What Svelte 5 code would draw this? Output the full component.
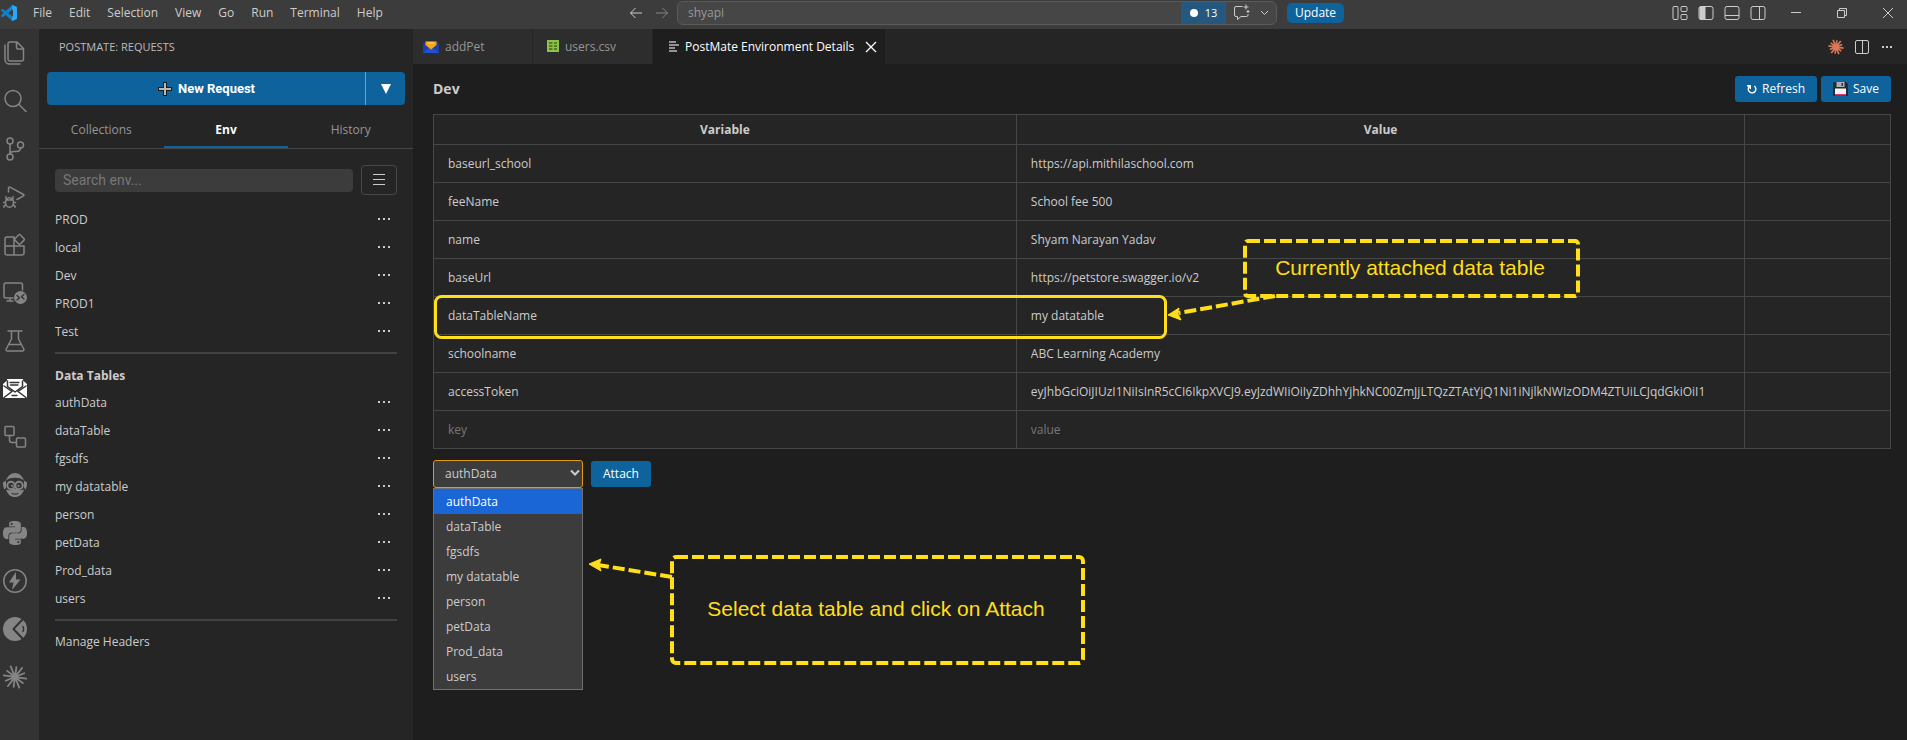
<script>
  const menus = ['File', 'Edit', 'Selection', 'View', 'Go', 'Run', 'Terminal', 'Help'];
  const activities = ['Explorer', 'Search', 'Source Control', 'Run and Debug', 'Extensions', 'Remote Explorer', 'Testing', 'PostMate', 'Diagrams', 'Assistant', 'Python', 'Thunder', 'Viewer', 'Claude'];
  const environments = ['PROD', 'local', 'Dev', 'PROD1', 'Test'];
  const tables = ['authData', 'dataTable', 'fgsdfs', 'my datatable', 'person', 'petData', 'Prod_data', 'users'];
  const variables = [
    { key: 'baseurl_school', value: 'https://api.mithilaschool.com' },
    { key: 'feeName', value: 'School fee 500' },
    { key: 'name', value: 'Shyam Narayan Yadav' },
    { key: 'baseUrl', value: 'https://petstore.swagger.io/v2' },
    { key: 'dataTableName', value: 'my datatable' },
    { key: 'schoolname', value: 'ABC Learning Academy' },
    { key: 'accessToken', value: 'eyJhbGciOiJIUzI1NiIsInR5cCI6IkpXVCJ9.eyJzdWIiOiIyZDhhYjhkNC00ZmJjLTQzZTAtYjQ1Ni1iNjlkNWIzODM4ZTUiLCJqdGkiOiI1' },
    { key: '', value: '' }
  ];
  let selected = $state('authData');

  const rays = Array.from({ length: 12 }, (_, i) => {
    const a = (i * 30 + 8) * Math.PI / 180;
    const r = i % 2 ? 10 : 11.5;
    return `M${12 + 2 * Math.cos(a)} ${12 + 2 * Math.sin(a)}L${12 + r * Math.cos(a)} ${12 + r * Math.sin(a)}`;
  }).join('');
</script>

{#snippet activityIcon(name)}
  <svg viewBox="0 0 24 24" width="24" height="24" fill="none" stroke="currentColor" stroke-width="1.5" stroke-linejoin="round" stroke-linecap="round" aria-hidden="true">
    {#if name === 'Explorer'}
      <path d="M7 1h7l6.500 6.500v10.500a2 2 0 0 1-2 2H7a2 2 0 0 1-2-2V3a2 2 0 0 1 2-2zM13.500 1v5.500a1.500 1.500 0 0 0 1.500 1.500h5.500M2 4v14.500a4.500 4.500 0 0 0 4.500 4.500H17" />
    {:else if name === 'Search'}
      <circle cx="10" cy="9.500" r="8" /><path d="M16 15.500l7 7" />
    {:else if name === 'Source Control'}
      <circle cx="7" cy="4" r="3" /><circle cx="7" cy="20" r="3" /><circle cx="17.500" cy="8" r="3" /><path d="M7 7v10M17.500 11c0 3-2 3.500-4.500 3.500h-2c-2.500 0-4 .5-4 2.500" />
    {:else if name === 'Run and Debug'}
      <path d="M5.500 7V3a1 1 0 0 1 1.500-.9l13.500 7.400a.8.800 0 0 1 0 1.400L14 14.500" />
      <ellipse cx="6.500" cy="17.500" rx="4" ry="4.800" /><path d="M3 15h7M3 11.500v2l1.500 1M10 11.500v2l-1.500 1M.5 17.500h2M10.500 17.500h2M1 22.500v-1.500l2-1M12 22.500v-1.500l-2-1" stroke-width="1.400" />
    {:else if name === 'Extensions'}
      <path d="M11 4H4a2 2 0 0 0-2 2v14a2 2 0 0 0 2 2h15a2 2 0 0 0 2-2v-7H2M11 4v18M21 13" /><rect x="12.700" y="2.700" width="7.500" height="7.500" rx="1" transform="rotate(45 16.500 6.500)" />
    {:else if name === 'Remote Explorer'}
      <path d="M10 17H3a2 2 0 0 1-2-2V4a2 2 0 0 1 2-2h14.500a2 2 0 0 1 2 2v5M4 20h6M7 17v3" />
      <circle cx="17.500" cy="16.500" r="6.500" fill="currentColor" stroke="none" /><path d="M14 14.500l2.500 2.200L14 19M21 13.500l-2.500 2.200 2.500 2.300" stroke="#333" stroke-width="1.300" />
    {:else if name === 'Testing'}
      <path d="M5 2h14M8.500 2v8L3.200 20a1.400 1.400 0 0 0 1.300 2h15a1.400 1.400 0 0 0 1.300-2L15.500 10V2M6.300 15.500h11.400" />
    {:else if name === 'PostMate'}
      <path d="M0 7l4-3.500V2h16v1.500L24 7v14H0z" fill="currentColor" stroke="none" />
      <path d="M4.500 4v5.500L12 15l7.500-5.500V4M1 9l8 5.500L1 20.500M23 9l-8 5.500 8 6" stroke="#333" stroke-width="1.500" />
      <path d="M7 5.500h9M7.500 8h7.500M9 18.500h5" stroke="#333" stroke-width="1.300" />
    {:else if name === 'Diagrams'}
      <rect x="2" y="1.500" width="9" height="9" rx="1" /><rect x="13.500" y="13" width="9" height="9" rx="1" /><path d="M6.500 10.500V15a2.500 2.500 0 0 0 2.500 2.500h4.500" />
    {:else if name === 'Assistant'}
      <path d="M3 7.500C4.500 3 8 0 12 0s7.500 3 9 7.500C18.500 5.500 15.500 4.800 12 4.800S5.500 5.500 3 7.500z" fill="currentColor" stroke="none" />
      <path d="M0 9.500l3-2v7l-1.500 2C.5 15 0 12 0 9.500zM24 9.500l-3-2v7l1.500 2c1-1.500 1.500-4.500 1.500-7z" fill="currentColor" stroke="none" />
      <path d="M3 16.500c2 1.200 5.500 1 7.500-.8h3c2 1.800 5.500 2 7.500.8C19.500 21.500 16 24 12 24s-7.500-2.500-9-7.500z" fill="currentColor" stroke="none" />
      <circle cx="8" cy="12.500" r="3.700" stroke-width="2" /><circle cx="16" cy="12.500" r="3.700" stroke-width="2" />
      <circle cx="9" cy="12.800" r="1.100" fill="currentColor" stroke="none" /><circle cx="15.500" cy="12.800" r="1.100" fill="currentColor" stroke="none" />
      <path d="M9 20.500c2 .8 4 .8 6 0" stroke="#333" stroke-width="1.200" />
    {:else if name === 'Python'}
      <path fill="currentColor" stroke="none" d="M14.25.18l.9.2.73.26.59.3.45.32.34.34.25.34.16.33.1.3.04.26.02.2-.01.13V8.500l-.05.63-.13.55-.21.46-.26.38-.3.31-.33.25-.35.19-.35.14-.33.1-.3.07-.26.04-.21.02H8.770l-.69.05-.59.14-.5.22-.41.27-.33.32-.27.35-.2.36-.15.37-.1.35-.07.32-.04.27-.02.21v3.060H3.170l-.21-.03-.28-.07-.32-.12-.35-.18-.36-.26-.36-.36-.35-.46-.32-.59-.28-.73-.21-.88-.14-1.050-.05-1.230.06-1.220.16-1.040.24-.87.32-.71.36-.57.4-.44.42-.33.42-.24.4-.16.36-.1.32-.05.24-.01h.16l.06.01h8.160v-.83H6.180l-.01-2.750-.02-.37.05-.34.11-.31.17-.28.25-.26.31-.23.38-.2.44-.18.51-.15.58-.12.64-.1.71-.06.77-.04.84-.02 1.270.05zm-6.300 1.980l-.23.33-.08.41.08.41.23.34.33.22.41.09.41-.09.33-.22.23-.34.08-.41-.08-.41-.23-.33-.33-.22-.41-.09-.41.09zm13.090 3.950l.28.06.32.12.35.18.36.27.36.35.35.47.32.59.28.73.21.88.14 1.040.05 1.230-.06 1.230-.16 1.040-.24.86-.32.71-.36.57-.4.45-.42.33-.42.24-.4.16-.36.09-.32.05-.24.02-.16-.01h-8.220v.82h5.840l.01 2.760.02.36-.05.34-.11.31-.17.29-.25.25-.31.24-.38.2-.44.17-.51.15-.58.13-.64.09-.71.07-.77.04-.84.01-1.270-.04-1.070-.14-.9-.2-.73-.25-.59-.3-.45-.33-.34-.34-.25-.34-.16-.33-.1-.3-.04-.25-.02-.2.01-.13v-5.340l.05-.64.13-.54.21-.46.26-.38.3-.32.33-.24.35-.2.35-.14.33-.1.3-.06.26-.04.21-.02.13-.01h5.840l.69-.05.59-.14.5-.21.41-.28.33-.32.27-.35.2-.36.15-.36.1-.35.07-.32.04-.28.02-.21V6.070h2.090l.14.01zm-6.470 14.250l-.23.33-.08.41.08.41.23.33.33.23.41.08.41-.08.33-.23.23-.33.08-.41-.08-.41-.23-.33-.33-.23-.41-.08-.41.08z" />
    {:else if name === 'Thunder'}
      <circle cx="12" cy="12" r="11.200" /><path d="M13 3L6 13.500h4.500L9 21l8.500-10.500H13z" fill="currentColor" stroke="none" />
    {:else if name === 'Viewer'}
      <circle cx="12" cy="12" r="12" fill="currentColor" stroke="none" /><path d="M19.500 2.500L10.500 12l9 9.500" stroke="#333" stroke-width="2" /><path d="M20 9.500c.8 1.600.8 3.400 0 5" stroke="#333" stroke-width="1.500" />
    {:else}
      <path d={rays} stroke-width="1.800" /><circle cx="12" cy="12" r="3" fill="currentColor" stroke="none" />
    {/if}
  </svg>
{/snippet}

<div class="window">
  <header class="titlebar">
    <nav class="menus" aria-label="Application menu">
      <svg class="brand" viewBox="0 0 24 24" width="16" height="16" aria-hidden="true">
        <defs><linearGradient id="brand"><stop offset=".68" stop-color="#0f80cc" /><stop offset=".72" stop-color="#29a8f5" /></linearGradient></defs>
        <path fill="url(#brand)" d="M23.150 2.587L18.210.21a1.494 1.494 0 0 0-1.705.29l-9.460 8.630-4.120-3.128a.999.999 0 0 0-1.276.057L.327 7.261A1 1 0 0 0 .326 8.740L3.899 12 .326 15.260a1 1 0 0 0 .001 1.479L1.650 17.940a.999.999 0 0 0 1.276.057l4.120-3.128 9.460 8.630a1.492 1.492 0 0 0 1.704.29l4.942-2.377A1.500 1.500 0 0 0 24 20.060V3.939a1.500 1.500 0 0 0-.85-1.352zm-5.146 14.861L10.826 12l7.178-5.448v10.896z" />
      </svg>
      {#each menus as menu}<button>{menu}</button>{/each}
    </nav>
    <div class="center">
      <button class="nav" aria-label="Back"><svg width="14" height="14" viewBox="0 0 14 14"><path d="M13 7H1.500M6.500 2l-5 5 5 5" /></svg></button>
      <button class="nav dim" aria-label="Forward"><svg width="14" height="14" viewBox="0 0 14 14"><path d="M1 7h11.500M7.500 2l5 5-5 5" /></svg></button>
      <div class="command">
        <button class="query">shyapi</button>
        <button class="count"><span class="dot"></span>13</button>
        <button class="chat" aria-label="Chat">
          <svg width="17" height="17" viewBox="0 0 17 17"><path d="M9.500 2.500H3A1.500 1.500 0 0 0 1.500 4v7A1.500 1.500 0 0 0 3 12.500h1.500v3l3.500-3h5.500A1.500 1.500 0 0 0 15 11v-1M13 .5v5M10.500 3h5M15 6v3M13.500 7.500h3" /></svg>
        </button>
        <button class="chat" aria-label="Chat options"><svg width="9" height="9" viewBox="0 0 9 9"><path d="M1 3l3.500 3.500L8 3" /></svg></button>
      </div>
      <button class="update">Update</button>
    </div>
    <div class="window-tools">
      <button aria-label="Customize layout"><svg width="16" height="16" viewBox="0 0 16 16"><rect x="1" y="1.500" width="5" height="13" rx="1" /><rect x="9" y="1.500" width="6" height="5" rx="1" /><rect x="9" y="9.500" width="6" height="5" rx="1" /></svg></button>
      <button aria-label="Toggle side bar"><svg width="16" height="16" viewBox="0 0 16 16"><rect x="1" y="1.500" width="14" height="13" rx="2" /><path d="M2 2h5v12H2z" fill="#ccc" /></svg></button>
      <button aria-label="Toggle panel"><svg width="16" height="16" viewBox="0 0 16 16"><rect x="1" y="1.500" width="14" height="13" rx="2" /><path d="M1 10.500h14" /></svg></button>
      <button aria-label="Toggle secondary side bar"><svg width="16" height="16" viewBox="0 0 16 16"><rect x="1" y="1.500" width="14" height="13" rx="2" /><path d="M9.500 1.500v13" /></svg></button>
    </div>
    <div class="window-controls">
      <button aria-label="Minimize"><svg width="12" height="12" viewBox="0 0 12 12"><path d="M1 5.500h10" /></svg></button>
      <button aria-label="Restore"><svg width="12" height="12" viewBox="0 0 12 12"><path d="M1.500 3.500h7v7h-7zM3.500 3V1.500h7v7H9" /></svg></button>
      <button aria-label="Close"><svg width="12" height="12" viewBox="0 0 12 12"><path d="M1 1l10 10M11 1L1 11" /></svg></button>
    </div>
  </header>

  <div class="workbench">
    <nav class="activity" aria-label="Activity bar">
      {#each activities as name}
        <button class:current={name === 'PostMate'} aria-label={name}>{@render activityIcon(name)}</button>
      {/each}
    </nav>

    <aside class="sidebar">
      <h2>POSTMATE: REQUESTS</h2>
      <div class="split">
        <button class="new">
          <svg width="16" height="16" viewBox="0 0 16 16" aria-hidden="true"><path d="M8 1v14M1 8h14" stroke="#1b1b1b" stroke-width="4" /><path d="M8 2v12M2 8h12" stroke="#b9b9b9" stroke-width="2" /></svg>
          New Request
        </button>
        <button class="more" aria-label="More request types"><svg width="10" height="10" viewBox="0 0 10 10"><path d="M0 0h10L5 10z" fill="#fff" /></svg></button>
      </div>
      <div class="tabs" role="tablist">
        <button role="tab" aria-selected="false">Collections</button>
        <button role="tab" aria-selected="true">Env</button>
        <button role="tab" aria-selected="false">History</button>
      </div>
      <div class="panel">
        <div class="search">
          <input type="text" placeholder="Search env..." aria-label="Search env" />
          <button aria-label="Menu"><svg width="12" height="12" viewBox="0 0 12 12"><path d="M0 .5h12M0 5.500h12M0 10.500h12" stroke="#ccc" stroke-width="1" /></svg></button>
        </div>
        <ul>
          {#each environments as name}
            <li><a href="#env">{name}</a><button aria-label={`Actions for ${name}`}><i></i><i></i><i></i></button></li>
          {/each}
        </ul>
        <hr />
        <h3>Data Tables</h3>
        <ul>
          {#each tables as name}
            <li><a href="#table">{name}</a><button aria-label={`Actions for ${name}`}><i></i><i></i><i></i></button></li>
          {/each}
        </ul>
        <hr />
        <a class="manage" href="#headers">Manage Headers</a>
      </div>
    </aside>

    <main class="editor">
      <div class="editor-tabs">
        <button class="file">
          <svg width="16" height="16" viewBox="0 0 16 16" aria-hidden="true"><path d="M0 5l3-3h10l3 3v9H0z" fill="#1d3fae" /><path d="M0 14l6-5 2 1 2-1 6 5z" fill="#2451d3" /><path d="M2.500 2.500h11V6L8 10.500 2.500 6z" fill="#f9a815" /><path d="M5 4h6" stroke="#ffe08a" /></svg>
          addPet
        </button>
        <button class="file">
          <svg width="16" height="16" viewBox="0 0 16 16" aria-hidden="true"><path d="M4 1h12v12H4z" fill="#8dc149" /><path d="M6 4h3.500M11 4h3M6 7h3.500M11 7h3M6 10h3.500M11 10h3" stroke="#3f6a1b" stroke-width="1.500" /></svg>
          users.csv
        </button>
        <button class="file active">
          <svg width="10" height="12" viewBox="0 0 10 12" aria-hidden="true"><path d="M0 1h7M0 4h10M0 7h6M0 10h8" stroke="#bbb" stroke-width="1.500" /></svg>
          PostMate Environment Details
          <svg class="close" width="12" height="12" viewBox="0 0 12 12" aria-hidden="true"><path d="M1 1l10 10M11 1L1 11" stroke="#fff" stroke-width="1.300" /></svg>
        </button>
        <div class="editor-actions">
          <button aria-label="Claude"><svg width="16" height="16" viewBox="0 0 24 24"><path d={rays} stroke="#d97757" stroke-width="2.500" /><circle cx="12" cy="12" r="4" fill="#d97757" /></svg></button>
          <button aria-label="Split editor"><svg width="16" height="16" viewBox="0 0 16 16" fill="none" stroke="#ccc"><rect x="1.500" y="1.500" width="13" height="13" rx="1.500" /><path d="M8.500 1.500v13" /></svg></button>
          <button class="dots" aria-label="More actions"><i></i><i></i><i></i></button>
        </div>
      </div>

      <section class="content">
        <div class="heading">
          <h1>Dev</h1>
          <button class="primary"><svg width="10" height="10" viewBox="0 0 10 10" fill="none" stroke="#fff" stroke-width="1.400" aria-hidden="true"><path d="M7.300 2A3.800 3.800 0 1 1 2.500 2.300M0 1.800h3.300v3.200" /></svg>Refresh</button>
          <button class="primary"><svg width="15" height="14" viewBox="0 0 15 14" aria-hidden="true"><path d="M1 0h12l2 2v12H0V1z" fill="#222b33" /><path d="M3.500 0h8v5h-8z" fill="#a9b0b5" /><path d="M8.500 1H10v3H8.500z" fill="#333" /><path d="M2 6.500h11V12H2z" fill="#f4f4f4" /><path d="M2 12h11v1.500H2z" fill="#e0356b" /></svg>Save</button>
        </div>

        <table>
          <colgroup><col class="key" /><col class="val" /><col /></colgroup>
          <thead><tr><th>Variable</th><th>Value</th><th></th></tr></thead>
          <tbody>
            {#each variables as row}
              <tr>
                <td><input type="text" value={row.key} placeholder="key" aria-label="Variable name" /></td>
                <td><input type="text" value={row.value} placeholder="value" aria-label="Variable value" /></td>
                <td></td>
              </tr>
            {/each}
          </tbody>
        </table>

        <div class="attach">
          <div class="picker">
            <select bind:value={selected} aria-label="Data table">
              {#each tables as name}<option>{name}</option>{/each}
            </select>
            <svg class="caret" width="10" height="8" viewBox="0 0 10 8" aria-hidden="true"><path d="M1 1.500l4 4 4-4" fill="none" stroke="#ccc" stroke-width="2" /></svg>
            <ul class="options" role="listbox" aria-label="Data tables">
              {#each tables as name}
                <li role="option" aria-selected={name === selected}>{name}</li>
              {/each}
            </ul>
          </div>
          <button class="primary">Attach</button>
        </div>

        <svg class="notes" width="1200" height="640" viewBox="0 0 1200 640" fill="none" stroke="#ffde1a">
          <rect x="22.500" y="232.500" width="730" height="41" rx="6" stroke-width="3" />
          <rect x="832" y="177" width="333" height="55" rx="3" stroke-width="4" stroke-dasharray="12 4" />
          <path d="M862 232L766 249" stroke-width="4" stroke-dasharray="12 4" />
          <path d="M755 251l11-7-1 6 3 6z" fill="#ffde1a" stroke-width="1" />
          <text x="997" y="211" text-anchor="middle">Currently attached data table</text>
          <rect x="259" y="493" width="411" height="106" rx="4" stroke-width="4" stroke-dasharray="12 4" />
          <path d="M259 513L185 501" stroke-width="4" stroke-dasharray="12 4" />
          <path d="M176 500l12-5-2 6 2 6z" fill="#ffde1a" stroke-width="1" />
          <text x="463" y="552" text-anchor="middle">Select data table and click on Attach</text>
        </svg>
      </section>
    </main>
  </div>
</div>

<style>
  :global(body) { margin: 0; background: #1e1e1e; }
  * { box-sizing: border-box; }
  button, input, select { font: inherit; color: inherit; }
  button { display: flex; align-items: center; justify-content: center; border: 0; padding: 0; background: none; cursor: pointer; white-space: nowrap; }
  a { color: inherit; text-decoration: none; }
  ul { list-style: none; margin: 0; padding: 0; }
  svg { flex: none; }
  i { display: block; width: 2px; height: 2px; background: #ccc; }

  .window { min-height: 100vh; display: flex; flex-direction: column; color: #ccc; font: 12px/16px "Open Sans", "Noto Sans", sans-serif; }

  .titlebar { display: grid; grid-template-columns: 61fr auto 42fr auto; height: 29px; padding-bottom: 4px; background: #3c3c3c; }
  .menus { display: flex; align-items: center; gap: 1px; padding-left: 1px; }
  .brand { margin-right: 7px; }
  .menus button { padding: 0 8px; }
  .center { display: flex; align-items: center; }
  .center svg, .window-tools svg, .window-controls svg { fill: none; stroke: #ccc; }
  .nav { width: 26px; }
  .dim { opacity: .5; }
  .command { display: flex; align-items: stretch; width: 600px; height: 24px; margin: 0 10px 0 2px; border: 1px solid #5a5a5a; border-radius: 6px; background: #464646; overflow: hidden; }
  .query { flex: 1; justify-content: flex-start; padding-left: 10px; color: #999; }
  .count { width: 45px; gap: 7px; background: #24587f; color: #fff; font-size: 11px; }
  .dot { width: 8px; height: 8px; border-radius: 50%; background: #fff; }
  .chat { padding: 0 7px; }
  .chat + .chat { padding: 0 7px 0 3px; }
  .update { height: 20px; padding: 0 8px; border-radius: 5px; background: #0e639c; color: #fff; }
  .window-tools { display: flex; justify-content: flex-end; gap: 10px; padding-right: 7px; }
  .window-controls { display: flex; margin-right: -4px; }
  .window-controls button { width: 46px; }

  .workbench { flex: 1; display: flex; }
  .activity { width: 39px; background: #333; color: #858585; }
  .activity button { width: 30px; height: 48px; }
  .activity .current { color: #fff; }

  .sidebar { width: 374px; background: #252526; }
  .sidebar h2 { margin: 0; padding: 10px 20px 0; height: 43px; font-size: 11px; font-weight: 400; color: #bbb; }
  .split { display: flex; height: 33px; margin: 0 8px; border-radius: 4px; background: #0e639c; color: #fff; overflow: hidden; }
  .new { flex: 1; gap: 5px; font-family: Roboto, sans-serif; font-size: 13px; font-weight: 700; }
  .more { width: 40px; border-left: 1px solid #6ea1c4; }
  .tabs { display: flex; height: 44px; border-bottom: 1px solid #474747; }
  .tabs button { flex: 1; padding-top: 8px; border-bottom: 2px solid transparent; color: #969696; }
  .tabs button[aria-selected="true"] { border-color: #0e639c; color: #fff; font-weight: 700; }
  .panel { padding: 16px; }
  .search { display: flex; align-items: center; gap: 8px; margin-bottom: 11px; }
  .search input { flex: 1; min-width: 0; height: 23px; padding: 0 8px; border: 0; border-radius: 4px; background: #3c3c3c; font-family: Roboto, sans-serif; font-size: 14px; }
  .search input::placeholder { color: #777; }
  .search button { width: 36px; height: 30px; border: 1px solid #474747; border-radius: 4px; }
  li { display: flex; align-items: center; }
  .panel li { justify-content: space-between; height: 28px; }
  .panel li button { gap: 3px; width: 26px; height: 24px; padding-bottom: 2px; }
  hr { height: 2px; margin: 6px 0 13px; border: 0; background: #424242; }
  h3 { margin: 0 0 4px; font-size: 12px; line-height: 18px; }
  .manage { display: block; }

  .editor { flex: 1; min-width: 0; }
  .editor-tabs { display: flex; height: 35px; background: #252526; }
  .file { width: 120px; justify-content: flex-start; gap: 6px; padding: 1px 0 0 10px; border-right: 1px solid #252526; background: #2d2d2d; color: #969696; }
  .file.active { width: auto; padding: 1px 8px 0 16px; background: #1e1e1e; color: #fff; }
  .close { margin-left: 5px; }
  .editor-actions { display: flex; gap: 10px; margin-left: auto; padding-right: 15px; }
  .dots { gap: 2px; padding-left: 2px; }

  .content { position: relative; padding: 12px 16px 0 20px; }
  .heading { display: flex; align-items: center; gap: 4px; height: 26px; margin-bottom: 12px; }
  h1 { flex: 1; margin: 0; font-size: 14px; line-height: 20px; }
  .primary { height: 26px; gap: 5px; padding: 0 12px; border-radius: 3px; background: #0e639c; color: #fff; }
  table { width: 100%; table-layout: fixed; border-collapse: collapse; background: #252526; }
  .key { width: 40%; }
  .val { width: 50%; }
  th, td { border: 1px solid #474747; }
  th { height: 30px; padding: 0; }
  td { height: 38px; padding: 0 4px 0 14px; }
  td input { display: block; width: 100%; padding: 0; border: 0; background: none; }
  td input::placeholder { color: #777; }
  .attach { display: flex; align-items: center; gap: 8px; margin-top: 11px; }
  .picker { position: relative; width: 150px; }
  select { display: block; width: 100%; height: 28px; padding: 0 11px; border: 1px solid #e39a0c; border-radius: 3px; background: #3c3c3c; appearance: none; }
  .caret { position: absolute; right: 3px; top: 9px; }
  .options { position: absolute; z-index: 1; top: 100%; left: 0; right: 0; border: 1px solid #707070; background: #3c3c3c; }
  .options li { height: 25px; padding: 0 12px; }
  .options li[aria-selected="true"] { background: #1a66d6; color: #fff; }
  .notes { position: absolute; top: 0; left: 0; pointer-events: none; }
  .notes text { fill: #ffde1a; stroke: none; font-family: "Liberation Sans", Arial, sans-serif; font-size: 21px; }
</style>
